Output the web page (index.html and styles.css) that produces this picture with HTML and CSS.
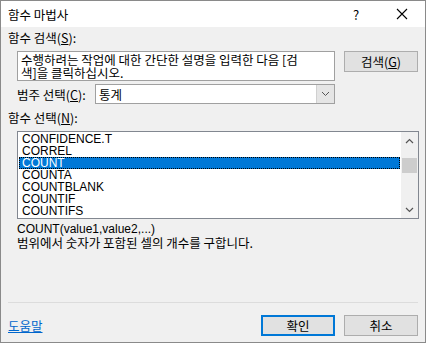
FILE: index.html
```html
<!DOCTYPE html>
<html>
<head>
  <title>함수 마법사</title>
  <link rel="stylesheet" href="styles.css">
</head>
<body>
  <div class="dialog">
    <div class="titlebar">
      <span class="title">함수 마법사</span>
      <span class="help-btn">?</span>
      <span class="close-btn">
        <svg width="12" height="12" viewBox="0 0 12 12"><path d="M1 1L11 11M11 1L1 11" stroke="#000" stroke-width="1.1" fill="none"/></svg>
      </span>
    </div>

    <div class="content">
      <div class="label">함수 검색(<u>S</u>):</div>
      <div class="search-row">
        <div class="search-box">
          <div class="search-line">수행하려는 작업에 대한 간단한 설명을 입력한 다음 [검</div>
          <div class="search-line">색]을 클릭하십시오.</div>
        </div>
        <button class="btn">검색(<u>G</u>)</button>
      </div>

      <div class="category-row">
        <span class="category-label">범주 선택(<u>C</u>):</span>
        <div class="select">
          <span class="select-value">통계</span>
          <span class="select-arrow">
            <svg width="9" height="6" viewBox="0 0 9 6"><path d="M1 1L4.5 4.5L8 1" stroke="#555" stroke-width="1" fill="none"/></svg>
          </span>
        </div>
      </div>

      <div class="label label-list">함수 선택(<u>N</u>):</div>
      <div class="listbox">
        <ul class="list-items">
          <li>CONFIDENCE.T</li>
          <li>CORREL</li>
          <li class="selected">COUNT</li>
          <li>COUNTA</li>
          <li>COUNTBLANK</li>
          <li>COUNTIF</li>
          <li>COUNTIFS</li>
        </ul>
        <div class="scrollbar">
          <span class="scroll-arrow">
            <svg width="9" height="6" viewBox="0 0 9 6"><path d="M1 5L4.5 1.5L8 5" stroke="#555" stroke-width="1.2" fill="none"/></svg>
          </span>
          <div class="scroll-track"><div class="scroll-thumb"></div></div>
          <span class="scroll-arrow">
            <svg width="9" height="6" viewBox="0 0 9 6"><path d="M1 1L4.5 4.5L8 1" stroke="#555" stroke-width="1.2" fill="none"/></svg>
          </span>
        </div>
      </div>

      <div class="syntax">COUNT(value1,value2,...)</div>
      <div class="desc">범위에서 숫자가 포함된 셀의 개수를 구합니다.</div>

      <div class="separator"></div>

      <div class="footer">
        <a class="help-link" href="#">도움말</a>
        <div class="footer-buttons">
          <button class="btn btn-default">확인</button>
          <button class="btn">취소</button>
        </div>
      </div>
    </div>
  </div>
</body>
</html>
```

FILE: styles.css
```css
body {
  margin: 0;
  padding: 0;
  background-color: #fff;
  font-family: "Noto Sans CJK KR", "Liberation Sans", sans-serif;
  font-size: 12.5px;
  color: #000;
}

.dialog {
  width: 426px;
  height: 343px;
  box-sizing: border-box;
  border: 1px solid #8a8a8a;
  background-color: #f0f0f0;
  display: flex;
  flex-direction: column;
}

.titlebar {
  height: 26px;
  background-color: #fff;
  display: flex;
  align-items: center;
}

.title {
  flex: 1;
  padding-left: 7px;
}

.help-btn {
  width: 46px;
  text-align: center;
  font-size: 13px;
}

.close-btn {
  width: 46px;
  display: flex;
  justify-content: center;
}

.content {
  flex: 1;
  display: flex;
  flex-direction: column;
  padding: 3px 7px 6px 7px;
}

.label {
  line-height: 16px;
  height: 16px;
}

.search-row {
  display: flex;
  margin-top: 5px;
  padding-left: 9px;
  align-items: flex-start;
}

.search-box {
  width: 318px;
  height: 30px;
  box-sizing: border-box;
  border: 1px solid #a0a0a0;
  background-color: #fff;
  padding: 1px 3px;
  white-space: nowrap;
}

.search-line {
  height: 13px;
  line-height: 13px;
}

.btn {
  font-family: "Noto Sans CJK KR", "Liberation Sans", sans-serif;
  font-size: 12.5px;
  width: 74px;
  height: 21px;
  padding: 0;
  margin-left: 9px;
  background-color: #e1e1e1;
  border: 1px solid #adadad;
  color: #000;
  line-height: 17px;
}

.category-row {
  display: flex;
  align-items: center;
  margin-top: 3px;
  padding-left: 9px;
}

.category-label {
  width: 78px;
}

.select {
  width: 240px;
  height: 20px;
  box-sizing: border-box;
  border: 1px solid #a0a0a0;
  background-color: #fff;
  display: flex;
  align-items: center;
}

.select-value {
  flex: 1;
  padding-left: 3px;
}

.select-arrow {
  width: 17px;
  height: 18px;
  background-color: #e5e5e5;
  border-left: 1px solid #d0d0d0;
  display: flex;
  align-items: center;
  justify-content: center;
}

.label-list {
  margin-top: 6px;
}

.listbox {
  margin-top: 5px;
  margin-left: 9px;
  width: 402px;
  height: 88px;
  box-sizing: border-box;
  border: 1px solid #828790;
  background-color: #fff;
  display: flex;
}

.list-items {
  flex: 1;
  list-style-type: none;
  margin: 0;
  padding: 1px 1px 0 1px;
  font-family: "Liberation Sans", sans-serif;
  font-size: 12px;
}

.list-items li {
  height: 12px;
  line-height: 12px;
  padding-left: 3px;
}

.list-items li.selected {
  background-color: #0078d7;
  color: #fff;
  outline: 1px dotted #000;
  outline-offset: -1px;
}

.scrollbar {
  width: 17px;
  background-color: #f0f0f0;
  display: flex;
  flex-direction: column;
}

.scroll-arrow {
  height: 17px;
  display: flex;
  align-items: center;
  justify-content: center;
}

.scroll-track {
  flex: 1;
}

.scroll-thumb {
  margin: 9px 1px 0 1px;
  height: 15px;
  background-color: #cdcdcd;
}

.syntax {
  margin-top: 3px;
  padding-left: 9px;
  height: 14px;
  line-height: 14px;
  font-family: "Liberation Sans", sans-serif;
  font-size: 12px;
}

.desc {
  padding-left: 9px;
  height: 14px;
  line-height: 14px;
}

.separator {
  margin-top: auto;
  border-top: 1px solid #dcdcdc;
}

.footer {
  display: flex;
  align-items: center;
  justify-content: space-between;
  margin-top: 12px;
}

.help-link {
  color: #0066cc;
  text-decoration: underline;
}

.footer-buttons {
  display: flex;
}

.btn-default {
  border: 2px solid #0078d7;
  line-height: 15px;
}
```
